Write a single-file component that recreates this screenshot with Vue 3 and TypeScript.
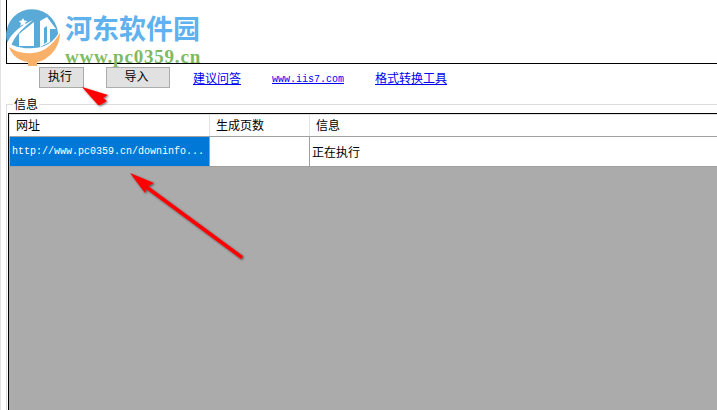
<script setup lang="ts">
import { ref } from "vue";

interface Column {
  title: string;
  width: number;
}

const columns = ref<Column[]>([
  { title: "网址", width: 200 },
  { title: "生成页数", width: 100 },
  { title: "信息", width: 407 },
]);

const links = ["建议问答", "www.iis7.com", "格式转换工具"];
</script>

<template>
  <div class="window">
    <div class="preview"></div>

    <div class="toolbar">
      <button class="btn btn-run">执行</button>
      <button class="btn btn-import">导入</button>
      <div class="links">
        <a v-for="l in links" :key="l" href="#" class="link" :class="{ mono: l.startsWith('www') }">{{ l }}</a>
      </div>
    </div>

    <fieldset class="group">
      <legend>信息</legend>
      <div class="grid">
        <div class="head">
          <div v-for="c in columns" :key="c.title" class="head-cell" :style="{ width: c.width + 'px' }">{{ c.title }}</div>
        </div>
        <div class="row">
          <div class="cell url selected">http://www.pc0359.cn/downinfo...</div>
          <div class="cell pages"></div>
          <div class="cell msg">正在执行</div>
        </div>
      </div>
    </fieldset>

    <!-- site watermark sits over the window -->
    <div class="watermark">
      <svg class="logo" width="60" height="60" viewBox="4 9 60 60">
        <path d="M7 42A26 26 0 1 1 58 33v1C53 42 45 48 33 48 24 49 14 47 7 42z" fill="#5aaad8"/>
        <path d="M7 43C12 32 22 25 33 20 24 27 15 35 11 46z" fill="#fff"/>
        <path d="M19 34 34 22V46H19z" fill="#fff"/>
        <path d="M40 21 47 17 56 29H50V42L40 47z" fill="#fff"/>
        <path d="M44 28 47 26V42L44 44z" fill="#5aaad8"/>
        <path d="m23 18 1.300 2.600 2.900.4-2.100 2 .5 2.900-2.600-1.400-2.600 1.400.5-2.900-2.100-2 2.900-.4z" fill="#fff"/>
        <path d="M9 47C16 52 24 54 33 53 45 52 53 44 60 33 60 50 46 61 37 62V66H28V62C20 61 12 56 9 47z" fill="#f9b068"/>
      </svg>
      <div class="brand">
        <div class="brand-name">河东软件园</div>
        <div class="brand-url">www.pc0359.cn</div>
      </div>
    </div>

    <svg class="arrows" width="717" height="410" viewBox="0 0 717 410">
      <defs>
        <filter id="soft" x="-30%" y="-30%" width="160%" height="160%">
          <feDropShadow dx="1" dy="1" stdDeviation="1.300" flood-color="#000" flood-opacity="0.6" />
        </filter>
      </defs>
      <g filter="url(#soft)" fill="#f00">
        <path d="M82 87 108 95 103 98 107 101 100 105 98 105z" />
        <path d="M130 173 154 183 148 186 243 256 241 259 146 189 145 193z" />
      </g>
    </svg>
  </div>
</template>

<style scoped>
.window {
  position: relative;
  width: 717px;
  height: 410px;
  box-sizing: border-box;
  border-left: 1px solid #e1e1e1;
  overflow: hidden;
  background: #fff;
  font-family: "Noto Sans CJK SC", "Liberation Sans", sans-serif;
  font-size: 12px;
  color: #000;
  display: flex;
  flex-direction: column;
}

.preview {
  height: 63px;
  margin-left: 5px;
  border-left: 1px solid #000;
  border-bottom: 1px solid #000;
  flex: none;
}

.toolbar {
  display: flex;
  align-items: flex-start;
  height: 33px;
  flex: none;
  padding: 3px 0 0 38px;
  box-sizing: border-box;
}

.btn {
  height: 21px;
  box-sizing: border-box;
  background: #e1e1e1;
  border: 1px solid #adadad;
  padding: 0 3px 4px 0;
  margin: 0;
  font: inherit;
  line-height: 15px;
  color: #000;
}
.btn-run {
  width: 45px;
  border-color: #a9a9a9;
}
.btn-import {
  width: 64px;
  margin-left: 22px;
}

.links {
  display: flex;
  margin-left: 23px;
  gap: 31px;
  padding-top: 2px;
}
.link {
  color: #00e;
  text-decoration: underline;
  line-height: 17px;
}
.link.mono {
  font-family: "Liberation Mono", monospace;
  font-size: 10px;
  padding-top: 2px;
}

.group {
  flex: 1;
  min-height: 0;
  margin: 0 0 0 5px;
  padding: 0 0 0 1px;
  border: 0;
  border-top: 1px solid #dcdcdc;
  border-left: 1px solid #dcdcdc;
  display: flex;
  flex-direction: column;
}
.group legend {
  margin-left: 5px;
  padding: 0 1px;
  font-size: 12px;
  line-height: 14px;
}

.grid {
  height: 300px;
  margin-top: 2px;
  background: #ababab;
  border-top: 1px solid #000;
  border-left: 1px solid #000;
  box-sizing: content-box;
}

.head {
  display: flex;
  height: 21px;
  background: #fff;
  border-top: 1px solid #e3e3e3;
  border-left: 1px solid #e3e3e3;
  border-bottom: 1px solid #a0a0a0;
}
.head-cell {
  box-sizing: border-box;
  padding-left: 6px;
  line-height: 20px;
  border-right: 1px solid #e3e3e3;
}
.head-cell:last-child {
  border-right: 0;
}

.row {
  display: flex;
  height: 29px;
  margin-left: 1px;
  background: #fff;
  border-bottom: 1px solid #a0a0a0;
}
.cell {
  box-sizing: border-box;
  line-height: 29px;
  border-right: 1px solid #a0a0a0;
}
.url {
  width: 200px;
  padding-left: 2px;
  font-family: "Liberation Mono", monospace;
  font-size: 10px;
}
.selected {
  background: #0078d7;
  color: #fff;
}
.pages {
  width: 100px;
}
.msg {
  flex: 1;
  padding-left: 2px;
  border-right: 0;
}

.watermark {
  position: absolute;
  left: 3px;
  top: 9px;
  display: flex;
  gap: 0;
  pointer-events: none;
}
.logo {
  flex: none;
}
.brand {
  margin-left: 1px;
  padding-top: 2px;
}
.brand-name {
  font-size: 27px;
  line-height: 34px;
  font-weight: 700;
  color: #5fb2ee;
  letter-spacing: 0;
}
.brand-url {
  margin-top: 3px;
  font-family: "Liberation Serif", serif;
  font-size: 19px;
  line-height: 18px;
  font-weight: 700;
  color: #7dbb62;
  letter-spacing: 0.8px;
}

.arrows {
  position: absolute;
  left: -1px;
  top: 0;
  pointer-events: none;
}
</style>
